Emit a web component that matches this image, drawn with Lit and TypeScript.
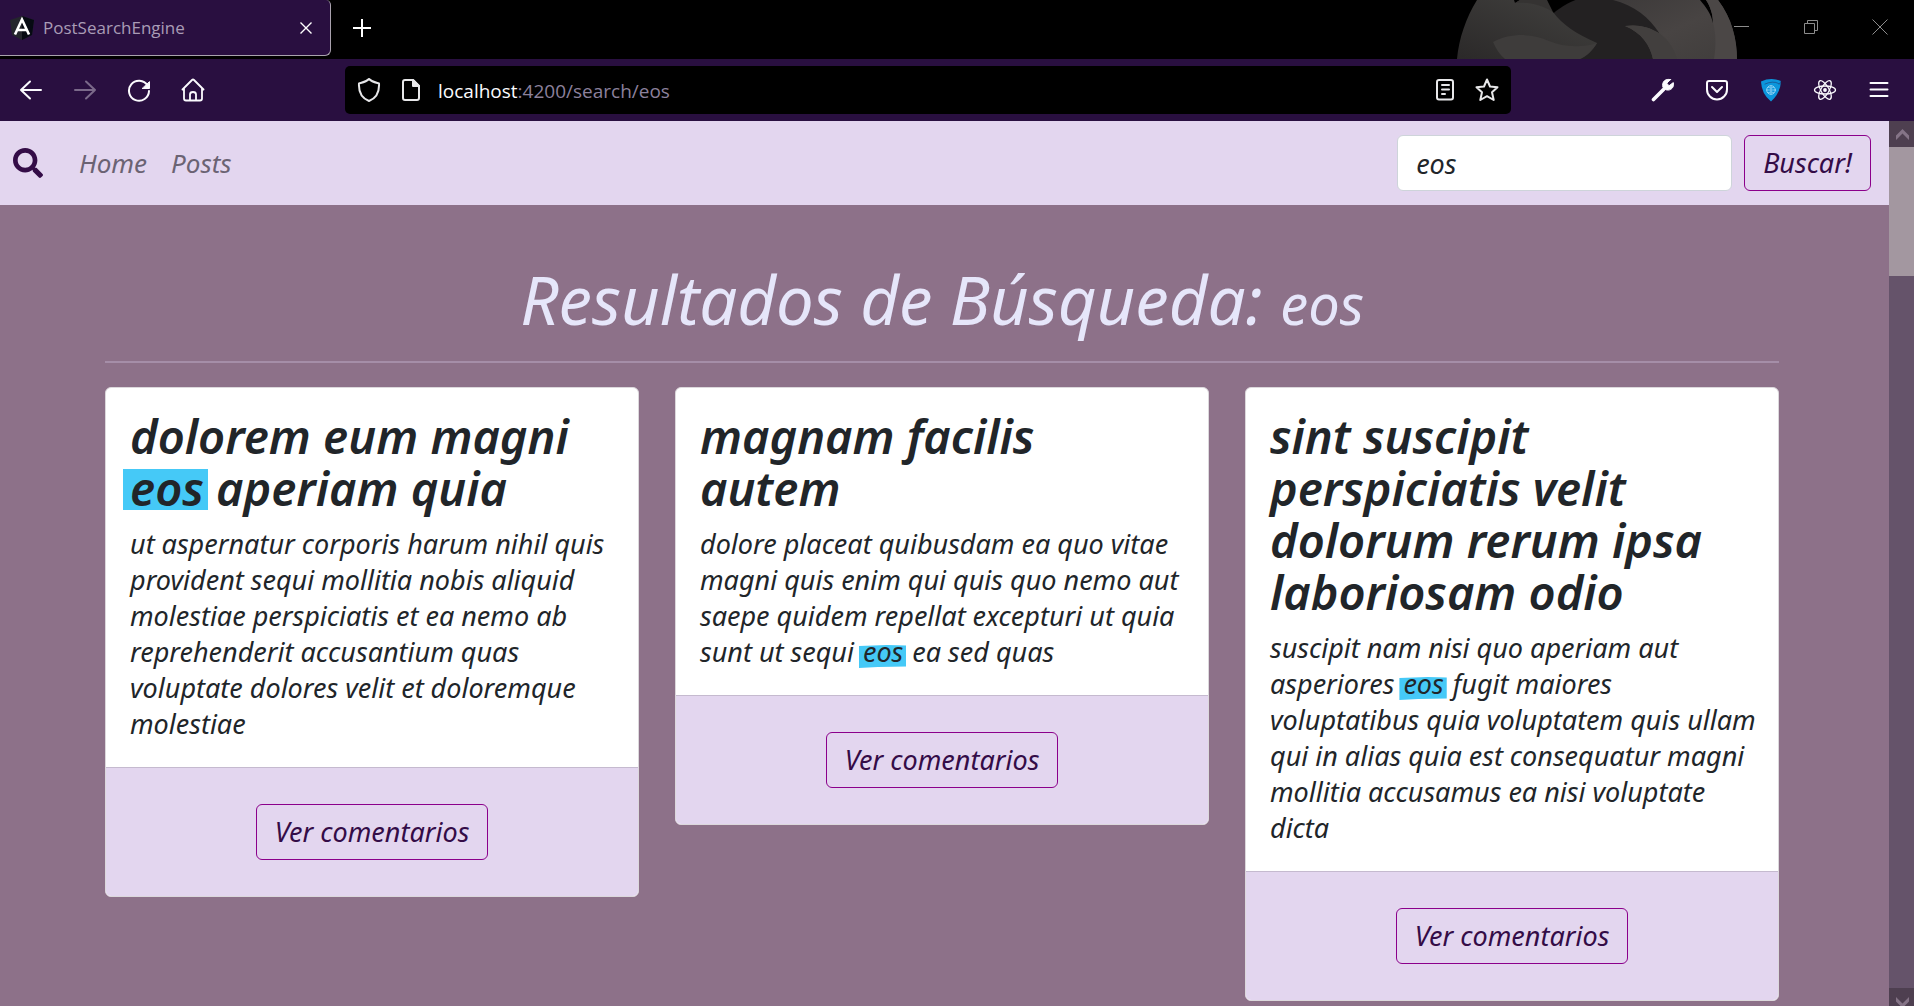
import { LitElement, html, svg, css, nothing } from "lit";
import { customElement, property, state } from "lit/decorators.js";

interface Post {
  id: number;
  title: string;
  body: string;
}

const POSTS: Post[] = [
  {
    id: 1,
    title: "dolorem eum magni eos aperiam quia",
    body: "ut aspernatur corporis harum nihil quis provident sequi mollitia nobis aliquid molestiae perspiciatis et ea nemo ab reprehenderit accusantium quas voluptate dolores velit et doloremque molestiae",
  },
  {
    id: 2,
    title: "magnam facilis autem",
    body: "dolore placeat quibusdam ea quo vitae magni quis enim qui quis quo nemo aut saepe quidem repellat excepturi ut quia sunt ut sequi eos ea sed quas",
  },
  {
    id: 3,
    title: "sint suscipit perspiciatis velit dolorum rerum ipsa laboriosam odio",
    body: "suscipit nam nisi quo aperiam aut asperiores eos fugit maiores voluptatibus quia voluptatem quis ullam qui in alias quia est consequatur magni mollitia accusamus ea nisi voluptate dicta",
  },
];

/* Wraps every whole-word occurrence of the term in a <mark>. */
function highlight(text: string, term: string) {
  return text
    .split(new RegExp(`\\b(${term})\\b`))
    .map((part) => (part === term ? html`<mark>${part}</mark>` : part));
}

@customElement("browser-tabs")
class BrowserTabs extends LitElement {
  static styles = css`
    :host {
      display: flex;
      position: relative;
      height: 59px;
      background: #000;
      font-family: "Open Sans", "Noto Sans", sans-serif;
      overflow: hidden;
    }
    .tab {
      display: flex;
      align-items: center;
      gap: 9px;
      box-sizing: border-box;
      width: 331px;
      height: 56px;
      padding: 0 18px 0 10px;
      background: #290f40;
      border: 1px solid #a9a2ae;
      border-width: 0 1px 1px 0;
      border-radius: 0 5px 6px 0;
      color: #a99cb6;
      font-size: 17px;
    }
    .title {
      flex: 1;
      white-space: nowrap;
    }
    button {
      display: grid;
      place-items: center;
      padding: 0;
      border: 0;
      background: none;
      color: #fff;
    }
    .new {
      width: 62px;
      height: 56px;
    }
    .controls {
      display: flex;
      margin-left: auto;
      position: relative;
    }
    .controls button {
      width: 69px;
      height: 54px;
      color: #8c8c8c;
    }
    .fox {
      position: absolute;
      right: 164px;
      top: 0;
    }
  `;

  render() {
    return html`
      <svg class="fox" width="300" height="59" viewBox="0 0 300 59" aria-hidden="true">
        <defs>
          <linearGradient id="head" x1="0" y1="1" x2="1" y2="0">
            <stop offset="0" stop-color="#2b2929" />
            <stop offset="1" stop-color="#42413f" />
          </linearGradient>
          <linearGradient id="tail" x1="0" y1="0" x2="1" y2="1">
            <stop offset="0" stop-color="#3d3a3a" />
            <stop offset="0.5" stop-color="#484443" />
            <stop offset="1" stop-color="#403d3c" />
          </linearGradient>
        </defs>
        <path d="M96 20C108 8 122 -1 140 -4C170 -4 200 10 209 34L214 59H90Z" fill="#232122" />
        <path d="M7 59C9 38 16 18 27 0H64L65 3L70 0H97C97 5 99 9 103 12C112 24 126 34 147 43C143 50 137 56 130 59Z" fill="url(#head)" />
        <path d="M65 3C78 2 90 4 103 12L97 0H70Z" fill="#353332" />
        <path d="M43 42C62 32 84 34 99 41C114 47 131 48 147 43C143 50 137 56 130 59H55C50 55 46 49 43 42Z" fill="#3e3c3b" />
        <path d="M163 0H250C256 7 261 14 263 23C263 14 260 6 256 0H268C282 18 287 40 287 59H203C200 45 192 33 175 26C188 24 199 27 209 33C200 18 184 5 163 0Z" fill="url(#tail)" />
        <path d="M175 26C188 24 199 27 209 33C219 40 224 49 227 59H203C200 45 192 33 175 26Z" fill="#423f3e" />
        <path d="M263 23C266 34 266 46 264 59H287C287 40 282 18 268 0H256C260 6 263 14 263 23Z" fill="#4b4746" />
      </svg>
      <div class="tab">
        <svg width="24" height="24" viewBox="0 0 24 24" aria-hidden="true">
          <path d="M12 0L24 4L22 19L12 24L2 19L0 4Z" fill="#24262c" />
          <path d="M12 0L24 4L22 19L12 24Z" fill="#060a12" />
          <path d="M5 18.500L12 3.500L19 18.500M8 14H16" fill="none" stroke="#fff" stroke-width="2.600" />
        </svg>
        <span class="title">PostSearchEngine</span>
        <button aria-label="Close tab">
          <svg width="12" height="12" viewBox="0 0 12 12" stroke="currentColor" stroke-width="1.4"><path d="M.5 .5L11.5 11.5M11.5 .5L.5 11.5" /></svg>
        </button>
      </div>
      <button class="new" aria-label="New tab">
        <svg width="18" height="18" viewBox="0 0 18 18" stroke="currentColor" stroke-width="2"><path d="M9 0V18M0 9H18" /></svg>
      </button>
      <div class="controls">
        <button aria-label="Minimize">
          <svg width="16" height="16" viewBox="0 0 16 16" stroke="currentColor"><path d="M0 7.5H15" /></svg>
        </button>
        <button aria-label="Restore">
          <svg width="14" height="14" viewBox="0 0 14 14" fill="none" stroke="currentColor"><path d="M.5 3.5H10.500V13.500H.5ZM3.500 3.500V.5H13.500V10.500H10.500" /></svg>
        </button>
        <button aria-label="Close window">
          <svg width="16" height="16" viewBox="0 0 16 16" stroke="currentColor"><path d="M.5 .5L15.500 15.500M15.500 .5L.5 15.500" /></svg>
        </button>
      </div>
    `;
  }
}

@customElement("browser-toolbar")
class BrowserToolbar extends LitElement {
  static styles = css`
    :host {
      display: flex;
      align-items: center;
      height: 62px;
      padding: 0 8px 0 4px;
      background: #290f40;
      color: #fbfbfe;
      font-family: "Open Sans", "Noto Sans", sans-serif;
    }
    button {
      display: grid;
      place-items: center;
      width: 54px;
      height: 60px;
      padding: 0;
      border: 0;
      background: none;
      color: inherit;
    }
    button:disabled {
      color: #7b6a8a;
    }
    .address {
      display: flex;
      align-items: center;
      flex: 1;
      min-width: 0;
      height: 48px;
      margin: 0 125px;
      padding: 0 3px;
      box-sizing: border-box;
      border-radius: 5px;
      background: #000;
      color: #e8e8ea;
    }
    .address button {
      width: 42px;
      height: 44px;
    }
    .url {
      flex: 1;
      padding: 2px 0 0 6px;
      font-size: 19px;
      white-space: nowrap;
      color: #8c819c;
    }
    .host {
      color: #fbfbfe;
    }
  `;

  private icon(body: unknown) {
    return html`<svg width="24" height="24" viewBox="0 0 24 24" fill="none" stroke="currentColor" stroke-width="2" stroke-linecap="round" stroke-linejoin="round" aria-hidden="true">${body}</svg>`;
  }

  render() {
    return html`
      <button aria-label="Back">${this.icon(svg`<path d="M22 12H2M11 3.500L2 12L11 20.500" />`)}</button>
      <button aria-label="Forward" disabled>${this.icon(svg`<path d="M2 12H22M13 3.500L22 12L13 20.500" />`)}</button>
      <button aria-label="Reload">
        ${this.icon(svg`<path d="M20.500 7.500A10 10 0 1 0 22 13" /><path d="M22.500 4V10.500H15.500Z" fill="currentColor" stroke-width="1" />`)}
      </button>
      <button aria-label="Home">
        ${this.icon(svg`<path d="M1.500 11.500L11 2Q12 1 13 2L22.500 11.500M3 10.500V20.500Q3 22.500 5 22.500H19Q21 22.500 21 20.500V10.500" stroke-width="1.800" /><path d="M9 22V16.500Q9 14 12 14T15 16.500V22" stroke-width="1.800" />`)}
      </button>
      <div class="address">
        <button aria-label="Tracking protection">
          ${this.icon(svg`<path d="M12 1C9 4 5.500 4.500 2 5.500C1.500 14 4.500 20 12 23C19.500 20 22.500 14 22 5.500C18.500 4.500 15 4 12 1Z" />`)}
        </button>
        <button aria-label="Site information">
          ${this.icon(svg`<path d="M14 2H6Q4 2 4 4V20Q4 22 6 22H18Q20 22 20 20V8Z" /><path d="M14 2V8H20Z" fill="currentColor" />`)}
        </button>
        <div class="url" role="textbox" aria-label="Address"><span class="host">localhost</span>:4200/search/eos</div>
        <button aria-label="Reader view">
          ${this.icon(svg`<rect x="4" y="2" width="16" height="19.500" rx="2" /><path d="M9 7H16M9 11.500H16M9 16H12" />`)}
        </button>
        <button aria-label="Bookmark">
          ${this.icon(svg`<path d="M12 1.500L15 8.500L22.500 9.200L17 14.200L18.700 22L12 18.200L5.300 22L7 14.200L1.500 9.200L9 8.500Z" />`)}
        </button>
      </div>
      <button aria-label="Developer tools">
        ${this.icon(svg`<path d="M2.500 21.500L12.500 11.500" stroke-width="3.600" /><path d="M19.500 1.600L15.800 5.200L18 7.800L22.300 4.600C23.500 9 20 13.200 15 11.800L12 9.500C10.300 4 14.500 .2 19.500 1.600Z" fill="currentColor" stroke-width="1" />`)}
      </button>
      <button aria-label="Pocket">
        ${this.icon(svg`<path d="M4 3H20Q22 3 22 5V11.500A10 10 0 0 1 2 11.500V5Q2 3 4 3Z" /><path d="M7 9L12 14L17 9" />`)}
      </button>
      <button aria-label="Privacy extension">
        ${this.icon(svg`<path d="M2 3.500Q12 -1 22 3Q21.500 15 12 23.500Q2.500 16 2 3.500Z" fill="#0c96dc" stroke="none" /><path d="M6 6Q14 2.500 19.500 5.500Q20 8 22 3" stroke="#290f40" stroke-width=".8" opacity=".5" /><circle cx="12" cy="12" r="4.300" stroke="#9bd8f5" stroke-width="1" /><path d="M8 12H16M12 8V16M9.500 9.500Q12 11 14.500 9.500M9.500 14.500Q12 13 14.500 14.500" stroke="#9bd8f5" stroke-width=".8" />`)}
      </button>
      <button aria-label="React developer tools">
        ${this.icon(svg`<circle cx="12" cy="12" r="1.900" fill="currentColor" stroke="none" /><g stroke-width="1.300"><ellipse cx="12" cy="12" rx="10.500" ry="4" /><ellipse cx="12" cy="12" rx="10.500" ry="4" transform="rotate(60 12 12)" /><ellipse cx="12" cy="12" rx="10.500" ry="4" transform="rotate(120 12 12)" /></g>`)}
      </button>
      <button aria-label="Menu">${this.icon(svg`<path d="M3.500 5H20.500M3.500 11.500H20.500M3.500 18H20.500" />`)}</button>
    `;
  }
}

@customElement("search-nav")
class SearchNav extends LitElement {
  @property() term = "";

  static styles = css`
    :host {
      display: block;
      background: #e3d6ef;
      font: italic 27px/36px "Noto Sans", sans-serif;
    }
    nav {
      display: flex;
      align-items: center;
      height: 84px;
      padding: 0 18px 0 13px;
    }
    .brand {
      display: block;
      height: 30px;
      margin-right: 36px;
      color: #340c47;
    }
    .link {
      margin-right: 24px;
      color: #6b6373;
      font-size: 26px;
      text-decoration: none;
    }
    form {
      display: flex;
      gap: 12px;
      margin-left: auto;
    }
    input,
    button {
      box-sizing: border-box;
      height: 56px;
      padding: 0 18px;
      border-radius: 6px;
      font: inherit;
    }
    input {
      width: 335px;
      border: 1px solid #ced4da;
      background: #fff;
      color: #212529;
    }
    button {
      border: 1px solid #8b008b;
      background: none;
      color: #340c47;
    }
  `;

  render() {
    return html`
      <nav>
        <a class="brand" href="#" aria-label="PostSearchEngine">
          <svg width="30" height="30" viewBox="0 0 512 512" fill="currentColor"><path d="M505 442.700L405.300 343c-4.500-4.500-10.600-7-17-7H372c27.600-35.300 44-79.700 44-128C416 93.100 322.900 0 208 0S0 93.100 0 208s93.100 208 208 208c48.300 0 92.700-16.400 128-44v16.300c0 6.400 2.500 12.500 7 17l99.700 99.700c9.400 9.400 24.600 9.400 33.900 0l28.300-28.300c9.400-9.400 9.400-24.600.1-34zM208 336c-70.700 0-128-57.200-128-128 0-70.700 57.200-128 128-128 70.700 0 128 57.200 128 128 0 70.700-57.200 128-128 128z" /></svg>
        </a>
        <a class="link" href="#home">Home</a>
        <a class="link" href="#posts">Posts</a>
        <form @submit=${(e: Event) => e.preventDefault()}>
          <input type="text" aria-label="Buscar" .value=${this.term} />
          <button type="submit">Buscar!</button>
        </form>
      </nav>
    `;
  }
}

@customElement("post-card")
class PostCard extends LitElement {
  @property({ attribute: false }) post?: Post;
  @property() term = "";

  static styles = css`
    :host {
      display: block;
      border: 1px solid #dcd8dc;
      border-radius: 6px;
      background: #fff;
      color: #212529;
      font: italic 27px/36px "Noto Sans", sans-serif;
      overflow: hidden;
    }
    .body {
      isolation: isolate;
      padding: 22px 12px 25px 24px;
    }
    h2 {
      margin: 0 12px 12px 0;
      font-size: 47px;
      line-height: 52px;
      font-weight: 600;
    }
    p {
      margin: 0;
    }
    mark {
      position: relative;
      background: none;
      color: inherit;
    }
    p mark {
      margin: 0 2px;
    }
    mark::before {
      content: "";
      position: absolute;
      z-index: -1;
      inset: 12px -3px 2px -4px;
      background: #45c9f7;
      clip-path: polygon(0 4%, 60% 0, 100% 2%, 100% 93%, 40% 96%, 0 100%);
    }
    h2 mark::before {
      inset: 13px -4px 10px -7px;
      clip-path: none;
    }
    .footer {
      display: flex;
      justify-content: center;
      padding: 36px 24px;
      border-top: 1px solid #c5bacf;
      background: #e3d6ef;
    }
    button {
      box-sizing: border-box;
      height: 56px;
      padding: 0 18px;
      border: 1px solid #8b008b;
      border-radius: 6px;
      background: none;
      color: #340c47;
      font: inherit;
    }
  `;

  render() {
    if (!this.post) return nothing;
    return html`
      <div class="body">
        <h2>${highlight(this.post.title, this.term)}</h2>
        <p>${highlight(this.post.body, this.term)}</p>
      </div>
      <div class="footer"><button type="button">Ver comentarios</button></div>
    `;
  }
}

@customElement("app-root")
class AppRoot extends LitElement {
  @state() private term = "eos";

  static styles = css`
    :host {
      display: flex;
      flex-direction: column;
      height: 100vh;
      overflow: hidden;
      background: #8d7189;
    }
    browser-tabs,
    browser-toolbar {
      flex: none;
    }
    .viewport {
      display: flex;
      flex: 1;
      min-height: 0;
    }
    .page {
      flex: 1;
      min-width: 0;
      overflow: hidden;
    }
    main {
      padding: 54px 110px 24px 105px;
    }
    h1 {
      margin: 0;
      padding-bottom: 22px;
      border-bottom: 2px solid #a58ea8;
      color: #e6e6fa;
      font: italic 400 67px/80px "Noto Sans", sans-serif;
      text-align: center;
    }
    h1 small {
      font-size: 56px;
      line-height: 56px;
    }
    .cards {
      display: grid;
      grid-template-columns: repeat(3, minmax(0, 1fr));
      align-items: start;
      gap: 36px;
      margin-top: 24px;
    }
    .scrollbar {
      display: flex;
      flex-direction: column;
      width: 25px;
      background: #65536a;
    }
    .scrollbar button {
      display: flex;
      justify-content: center;
      align-items: center;
      height: 26px;
      padding: 0 0 0 1px;
      border: 0;
      background: #4e3f50;
      color: #857487;
    }
    .thumb {
      height: 129px;
      background: #a397a0;
    }
    .scrollbar .down {
      align-items: end;
      height: 18px;
      margin-top: auto;
    }
    .scrollbar svg {
      display: block;
    }
  `;

  render() {
    return html`
      <browser-tabs></browser-tabs>
      <browser-toolbar></browser-toolbar>
      <div class="viewport">
        <div class="page">
          <search-nav .term=${this.term}></search-nav>
          <main>
            <h1>Resultados de Búsqueda: <small>${this.term}</small></h1>
            <div class="cards">
              ${POSTS.map((post) => html`<post-card .post=${post} .term=${this.term}></post-card>`)}
            </div>
          </main>
        </div>
        <div class="scrollbar">
          <button aria-label="Scroll up">
            <svg width="13" height="11" viewBox="0 0 13 11"><path d="M0 6.500L6.500 0L13 6.500V11L6.500 4.500L0 11Z" fill="currentColor" /></svg>
          </button>
          <div class="thumb"></div>
          <button class="down" aria-label="Scroll down">
            <svg width="13" height="9" viewBox="0 0 13 9"><path d="M0 0L6.500 6.500L13 0V4.500L6.500 11L0 4.500Z" fill="currentColor" /></svg>
          </button>
        </div>
      </div>
    `;
  }
}
